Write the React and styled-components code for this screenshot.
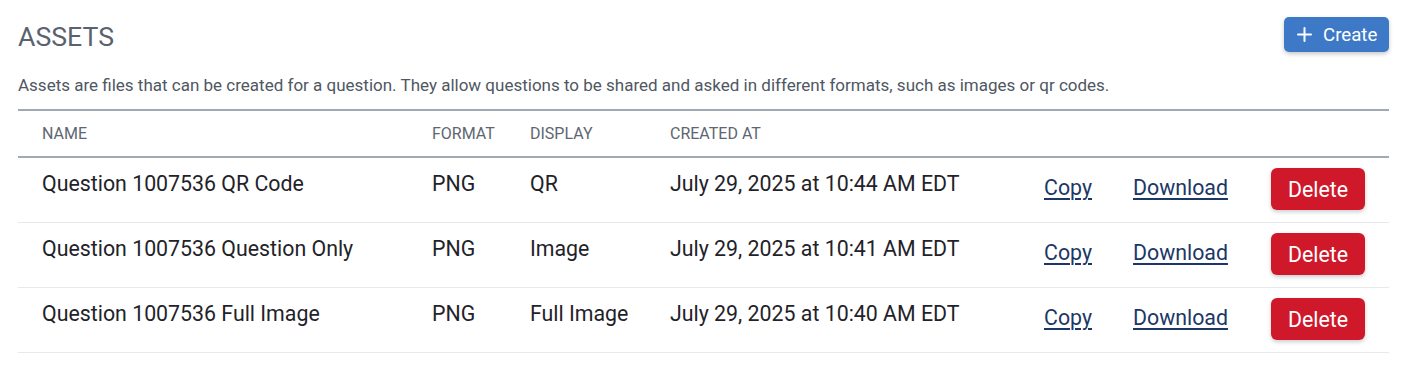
import React from "react";
import styled, { createGlobalStyle } from "styled-components";

const GlobalStyle = createGlobalStyle`
  html, body { margin: 0; padding: 0; background: #ffffff; }
  body { font-family: Roboto, "Noto Sans", "Liberation Sans", sans-serif; }
  *, *::before, *::after { box-sizing: border-box; }
`;

const Page = styled.div`
  padding: 0 20px 0 18px;
`;

const HeaderBar = styled.div`
  display: flex;
  justify-content: space-between;
  align-items: flex-start;
  padding-top: 17px;
`;

const Title = styled.h1`
  margin: 4px 0 0;
  font-size: 26.67px;
  line-height: 32px;
  font-weight: 400;
  color: #5a6270;
  letter-spacing: 0;
`;

const CreateButton = styled.button`
  display: inline-flex;
  align-items: center;
  gap: 11px;
  height: 35px;
  width: 105px;
  padding: 0 0 0 13px;
  border: none;
  border-radius: 5px;
  background: #3e79c8;
  color: #ffffff;
  font-family: inherit;
  font-size: 18.67px;
  font-weight: 400;
  box-shadow: 0 2px 4px rgba(0, 0, 0, 0.22);
  cursor: pointer;
`;

const Description = styled.p`
  margin: 20px 0 12px;
  font-size: 17px;
  line-height: 24px;
  color: #4f5763;
`;

const Table = styled.table`
  width: 100%;
  border-collapse: collapse;
  table-layout: fixed;
`;

const HeadRow = styled.tr`
  border-top: 2px solid #a1a9b4;
  border-bottom: 2px solid #a1a9b4;
`;

const Th = styled.th`
  width: ${(p) => (p.$w ? `${p.$w}px` : "auto")};
  height: 47px;
  padding: 0 0 0 24px;
  text-align: left;
  font-size: 16px;
  line-height: 20px;
  font-weight: 400;
  color: #5d6671;
  text-transform: uppercase;
  vertical-align: middle;
`;

const Row = styled.tr`
  border-bottom: 1px solid #e6e8eb;
`;

const Td = styled.td`
  padding: ${(p) => (p.$link ? "18px" : "14px")} 0 0 24px;
  font-size: 21.33px;
  line-height: 24px;
  color: #1f2329;
  vertical-align: top;
  white-space: nowrap;
`;

const ButtonCell = styled.td`
  padding: 10px 24px 12px 24px;
  vertical-align: top;
`;

const Link = styled.a`
  color: #1c3766;
  text-decoration: underline;
  text-decoration-thickness: 1.5px;
  text-underline-offset: 3px;
  cursor: pointer;
`;

const DeleteButton = styled.button`
  width: 94px;
  height: 42px;
  border: none;
  border-radius: 6px;
  background: #d0182b;
  color: #ffffff;
  font-family: inherit;
  font-size: 21.33px;
  font-weight: 400;
  box-shadow: 0 2px 4px rgba(0, 0, 0, 0.2);
  cursor: pointer;
`;

const PlusIcon = () => (
  <svg width="15" height="15" viewBox="0 0 15 15" fill="none">
    <path d="M7.5 1v13M1 7.5h13" stroke="#ffffff" strokeWidth="2" strokeLinecap="round" />
  </svg>
);

const assets = [
  { name: "Question 1007536 QR Code", format: "PNG", display: "QR", created: "July 29, 2025 at 10:44 AM EDT" },
  { name: "Question 1007536 Question Only", format: "PNG", display: "Image", created: "July 29, 2025 at 10:41 AM EDT" },
  { name: "Question 1007536 Full Image", format: "PNG", display: "Full Image", created: "July 29, 2025 at 10:40 AM EDT" },
];

export default function App() {
  return (
    <Page>
      <GlobalStyle />
      <HeaderBar>
        <Title>ASSETS</Title>
        <CreateButton>
          <PlusIcon />
          Create
        </CreateButton>
      </HeaderBar>
      <Description>
        Assets are files that can be created for a question. They allow questions to be shared and asked in different formats, such as images or qr codes.
      </Description>
      <Table>
        <thead>
          <HeadRow>
            <Th $w={390}>Name</Th>
            <Th $w={98}>Format</Th>
            <Th $w={140}>Display</Th>
            <Th $w={374}>Created At</Th>
            <Th $w={89}></Th>
            <Th $w={138}></Th>
            <Th></Th>
          </HeadRow>
        </thead>
        <tbody>
          {assets.map((a) => (
            <Row key={a.name}>
              <Td>{a.name}</Td>
              <Td>{a.format}</Td>
              <Td>{a.display}</Td>
              <Td>{a.created}</Td>
              <Td $link>
                <Link>Copy</Link>
              </Td>
              <Td $link>
                <Link>Download</Link>
              </Td>
              <ButtonCell>
                <DeleteButton>Delete</DeleteButton>
              </ButtonCell>
            </Row>
          ))}
        </tbody>
      </Table>
    </Page>
  );
}
